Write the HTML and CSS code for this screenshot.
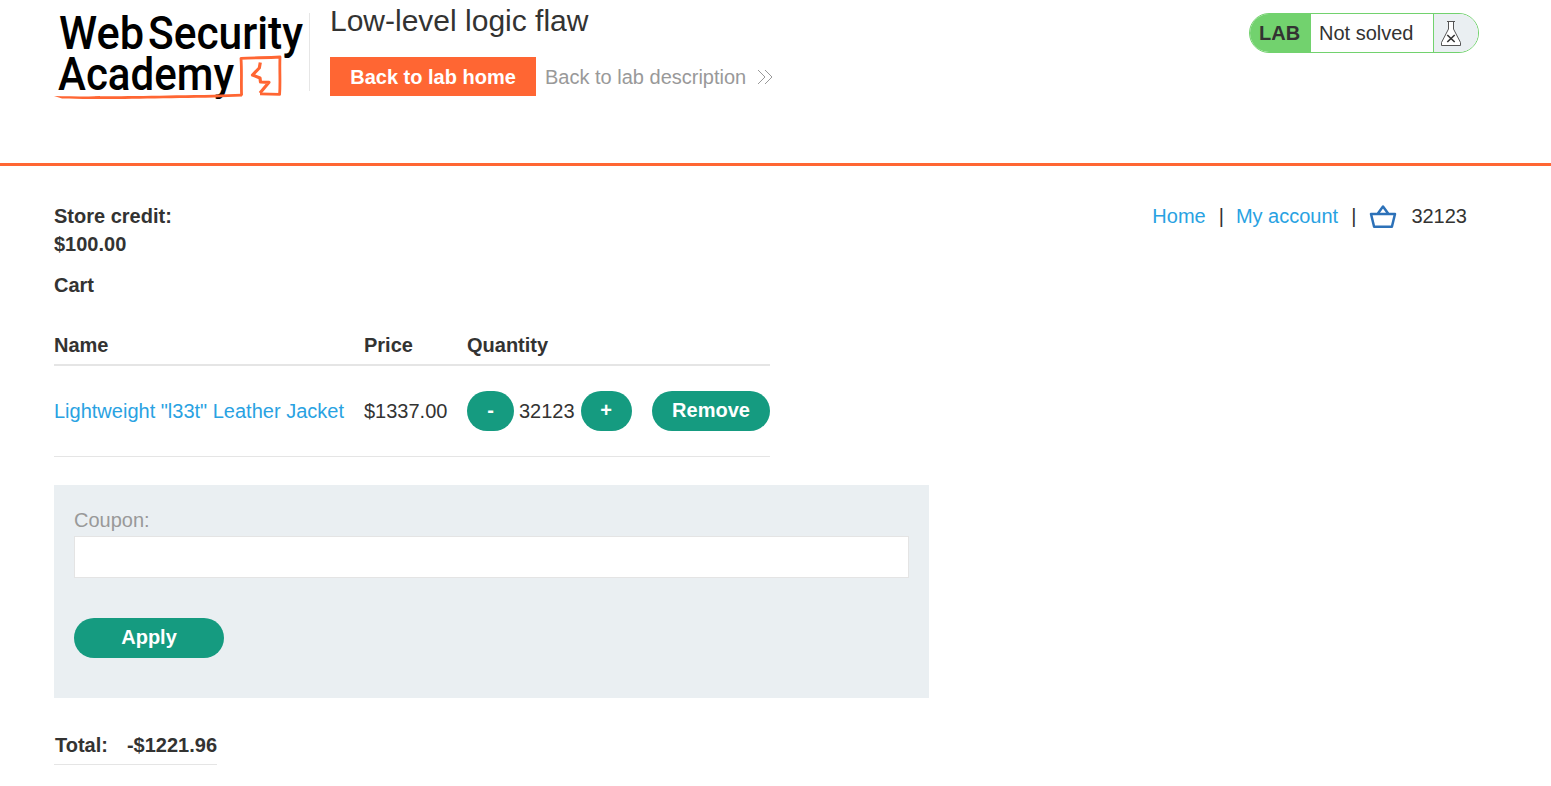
FILE: index.html
```
<!DOCTYPE html>
<html lang="en">
<head>
<meta charset="utf-8">
<title>Low-level logic flaw</title>
<link rel="stylesheet" href="styles.css">
</head>
<body>
<header class="lab-header">
  <svg class="logo" width="256" height="110" viewBox="54 0 256 110" role="img" aria-label="Web Security Academy">
    <g class="logo-text">
      <text x="59" y="49" textLength="85" lengthAdjust="spacingAndGlyphs">Web</text>
      <text x="148" y="49" textLength="155" lengthAdjust="spacingAndGlyphs">Security</text>
      <text x="58" y="90" textLength="176" lengthAdjust="spacingAndGlyphs">Academy</text>
    </g>
    <path class="logo-rule" d="M54 96 C90 97 140 96 214 94.8 L242 93.8 V96.6 L214 97.4 C150 98.4 90 99.8 62 98.6 Z"/>
    <path class="logo-box" d="M241.6 95.5 C241 84 242 72 241 58.3 C254 57.5 267 58 280 57 C279.4 69 280.5 82 279.6 94.3 L260 93.8"/>
    <path class="logo-bolt" d="M260.3 62.5 L259.3 68 L252.5 75 L260 78 L260.5 82 L269 82.3 L260 93"/>
    <path class="logo-divider" d="M309.5 13V91"/>
  </svg>
  <div class="title">
    <h1>Low-level logic flaw</h1>
    <div class="actions">
      <a class="lab-home">Back to lab home</a>
      <a class="lab-desc"><span>Back to lab description</span>
        <svg width="16" height="16" viewBox="0 0 16 16"><path d="M1 1L8 8L1 15M8 1L15 8L8 15"/></svg>
      </a>
    </div>
  </div>
  <div class="status">
    <span class="status-tag">LAB</span>
    <span class="status-text">Not solved</span>
    <span class="status-icon">
      <svg width="22" height="27" viewBox="0 0 22 27"><path class="flask" d="M7 1.5H15M8.5 2V9L1.5 22.5V25.5H20.5V22.5L13.5 9V2"/><path class="cross" d="M7.3 15L14.7 22M14.7 15L7.3 22"/></svg>
    </span>
  </div>
</header>
<main class="page">
  <div class="top">
    <p class="credit">Store credit:<br>$100.00</p>
    <nav class="nav">
      <a>Home</a><span>|</span><a>My account</a><span>|</span>
      <svg width="28" height="25" viewBox="0 0 28 25"><path d="M2 10H26L22.9 22.8H5.1ZM8.5 10L14 2.6L19.5 10"/></svg>
      <span class="count">32123</span>
    </nav>
  </div>
  <h2>Cart</h2>
  <table class="cart">
    <tr class="head"><th class="c-name">Name</th><th class="c-price">Price</th><th class="c-qty">Quantity</th><th class="c-remove"></th></tr>
    <tr class="item">
      <td><a>Lightweight "l33t" Leather Jacket</a></td>
      <td>$1337.00</td>
      <td><div class="qty"><button class="btn minus">-</button><span>32123</span><button class="btn plus">+</button></div></td>
      <td><button class="btn remove">Remove</button></td>
    </tr>
  </table>
  <form class="coupon">
    <label for="coupon">Coupon:</label>
    <input id="coupon" type="text">
    <button class="btn apply" type="button">Apply</button>
  </form>
  <div class="total"><span>Total:</span><span>-$1221.96</span></div>
</main>
</body>
</html>
```
FILE: styles.css
```
* { box-sizing: border-box; }
body {
  margin: 0;
  background: #fff;
  color: #333332;
  font: 20px/28px "Liberation Sans", Arial, sans-serif;
  overflow: hidden;
}
h1, h2, p { margin: 0; }
svg { display: block; fill: none; }
a { color: #29a2e2; }

.lab-header {
  display: flex;
  align-items: flex-start;
  height: 166px;
  padding: 0 72px 0 54px;
  border-bottom: 3px solid #ff6633;
}
.logo { flex: none; overflow: visible; }
.logo-text { fill: #000; font: 500 46.5px Roboto, sans-serif; }
.logo-rule { fill: #ff6633; }
.logo-box { stroke: #ff6633; stroke-width: 2.8; stroke-linejoin: round; }
.logo-bolt { stroke: #ff6633; stroke-width: 3.2; stroke-linejoin: round; }
.logo-divider { stroke: #e6e6e6; }

.title { margin-left: 20px; }
.title h1 { height: 57px; padding-top: 4px; font-size: 30px; font-weight: 400; line-height: 34px; }
.actions { display: flex; gap: 9px; }
.lab-home {
  width: 206px;
  height: 39px;
  padding-top: 1px;
  background: #ff6633;
  color: #fff;
  font-weight: 700;
  line-height: 39px;
  text-align: center;
}
.lab-desc { display: flex; align-items: center; gap: 11px; height: 39px; color: #999; line-height: 39px; }
.lab-desc span { padding-top: 2px; }
.lab-desc svg { stroke: #999; }

.status {
  display: flex;
  width: 230px;
  height: 40px;
  margin: 13px 0 0 auto;
  border: 1px solid #72d26e;
  border-radius: 20px;
  overflow: hidden;
  line-height: 38px;
}
.status-tag { width: 61px; padding-left: 9px; background: #72d26e; font-weight: 700; }
.status-text { width: 122px; padding-left: 8px; }
.status-icon { flex: 1; padding: 6px 0 0 6px; border-left: 1px solid #72d26e; background: #eaeff2; }
.flask { fill: #fff; stroke: #555; stroke-width: 1; }
.cross { stroke: #333; stroke-width: 1.6; }

.page { padding: 36px 84px 0 54px; }
.top { display: flex; justify-content: space-between; align-items: flex-start; }
.credit, h2 { font-size: 20px; font-weight: 700; }
h2 { margin-top: 13px; line-height: 28px; }
.nav { display: flex; }
.nav span { margin: 0 12px 0 13px; }
.nav svg { margin: 2px 0 0 1px; stroke: #2c71b8; stroke-width: 2.5; stroke-linejoin: round; }
.nav .count { margin: 0 0 0 14px; }

.cart { width: 716px; margin-top: 25px; border-collapse: collapse; table-layout: fixed; }
.cart th, .cart td { padding: 0; text-align: left; }
.cart th { padding-top: 1px; }
.head { height: 41px; border-bottom: 2px solid #e5e5e5; }
.item { height: 91px; border-bottom: 1px solid #e5e5e5; }
.c-name { width: 310px; }
.c-price { width: 103px; }
.c-qty { width: 185px; }
.qty { display: flex; align-items: center; }
.qty span { margin: 0 6px 0 5px; }

.btn {
  display: block;
  height: 40px;
  padding: 0;
  border: 0;
  border-radius: 20px;
  background: #159b80;
  color: #fff;
  font: 700 20px "Liberation Sans", Arial, sans-serif;
}
.minus { width: 47px; }
.plus { width: 51px; }
.remove { width: 118px; }
.apply { width: 150px; margin-top: 40px; }

.coupon {
  width: 875px;
  height: 213px;
  margin-top: 28px;
  padding: 21px 20px 0;
  background: #eaeff2;
}
.coupon label { display: block; height: 30px; color: #999; }
.coupon input { display: block; width: 100%; height: 42px; padding: 0 10px; border: 1px solid #e4e4e4; background: #fff; font: inherit; }

.total {
  display: flex;
  justify-content: space-between;
  width: 163px;
  height: 34px;
  margin-top: 33px;
  padding-left: 1px;
  border-bottom: 1px solid #e5e5e5;
  font-weight: 700;
}
```
